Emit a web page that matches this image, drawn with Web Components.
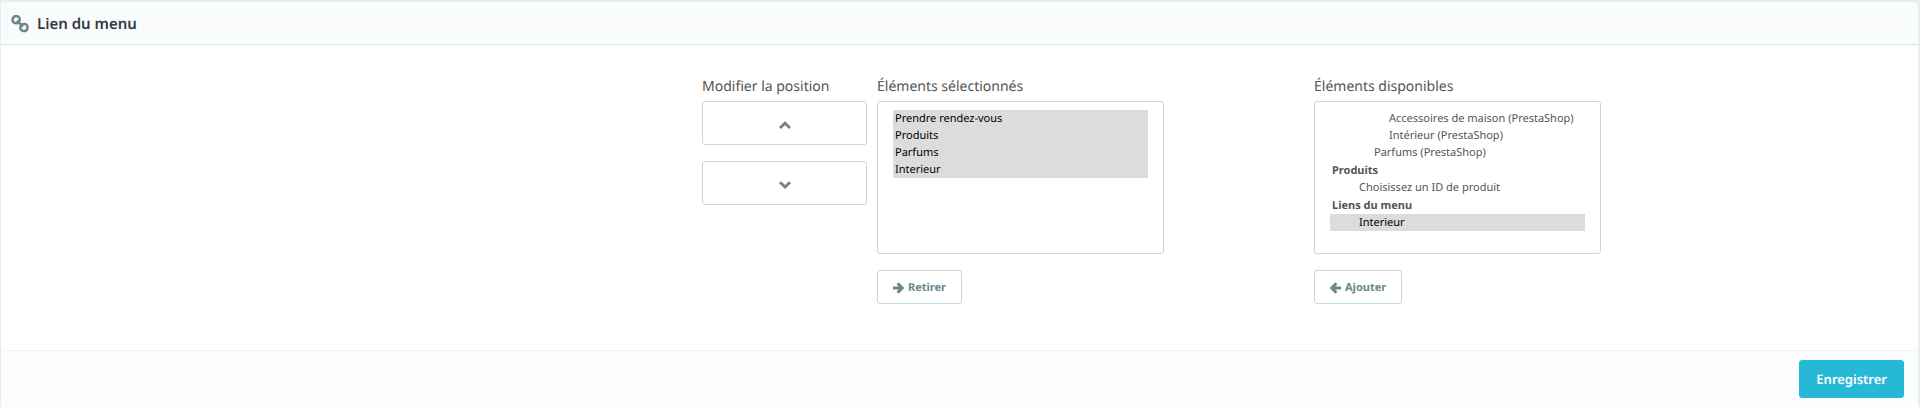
<!DOCTYPE html>
<html lang="fr">
<head>
<meta charset="utf-8">
<title>Lien du menu</title>
<style>
body { margin: 0; background: #e6eeef; font-family: "Noto Sans", "Open Sans", sans-serif; font-size: 14px; color: #555; text-rendering: geometricPrecision; }
</style>
</head>
<body>
<menu-link-form></menu-link-form>
<script>
const ICONS = {
  link: '<svg viewBox="0 0 18 18" width="18" height="18" fill="none" stroke="currentColor" stroke-width="2.5"><rect x="1.6" y="1.2" width="7" height="7" rx="3" transform="rotate(8 5 5)"/><rect x="9.4" y="9" width="7" height="7" rx="3" transform="rotate(8 13 13)"/><path d="M6 5.6L12 11.6" stroke-width="2.2"/></svg>',
  up: '<svg viewBox="0 0 12 8" width="12" height="8" fill="none" stroke="currentColor" stroke-width="2.8"><path d="M1 7L6 2.2L11 7"/></svg>',
  down: '<svg viewBox="0 0 12 8" width="12" height="8" fill="none" stroke="currentColor" stroke-width="2.8"><path d="M1 1.2L6 6L11 1.2"/></svg>',
  right: '<svg viewBox="0 0 11 12" width="11" height="12" fill="none" stroke="currentColor" stroke-width="2.8"><path d="M0 6H9M4.6 1.2L9.2 6L4.6 10.8"/></svg>',
  left: '<svg viewBox="0 0 11 12" width="11" height="12" fill="none" stroke="currentColor" stroke-width="2.8"><path d="M11 6H2M6.4 1.2L1.8 6L6.4 10.8"/></svg>'
};

class UiIcon extends HTMLElement {
  connectedCallback() {
    this.attachShadow({ mode: 'open' }).innerHTML =
      `<style>:host{display:inline-flex;flex:none}svg{display:block}</style>${ICONS[this.getAttribute('name')]}`;
  }
}
customElements.define('ui-icon', UiIcon);

class UiButton extends HTMLElement {
  connectedCallback() {
    const label = this.getAttribute('label');
    this.attachShadow({ mode: 'open' }).innerHTML = `
      <style>
        :host { display: block; }
        button { box-sizing: border-box; display: flex; align-items: center; justify-content: center; gap: 4px;
          margin: 0; padding: 1px 15px 0; height: 34px; border: 1px solid #c7d6db; border-radius: 3px; background: #fff;
          font-family: inherit; font-weight: 700; font-size: 11px; line-height: 16px; color: #6c868e; text-rendering: inherit; }
        :host([kind=block]) button { width: 100%; height: 44px; padding: 4px 16px 0; }
        :host([kind=primary]) button { height: 38px; padding: 0 16px; border-color: #25b9d7; background: #25b9d7;
          color: #fff; font-weight: 600; font-size: 13px; line-height: 20px; }
      </style>
      <button type="button"${label ? ` aria-label="${label}"` : ''}><slot></slot></button>`;
  }
}
customElements.define('ui-button', UiButton);

class UiPanel extends HTMLElement {
  connectedCallback() {
    this.attachShadow({ mode: 'open' }).innerHTML = `
      <style>
        :host { display: flex; flex-direction: column; box-sizing: border-box; min-height: 100vh; padding: 2px 2px 0 1px; }
        section { flex: 1; display: flex; flex-direction: column; background: #fff; border-radius: 4px 4px 0 0; overflow: hidden; }
        header { box-sizing: border-box; display: flex; align-items: center; gap: 8px; height: 43px; padding: 1px 10px 0;
          background: #fafbfd; border-bottom: 1px solid #d3e8eb; color: #6c868e; }
        h2 { margin: 0; font-size: 15px; line-height: 20px; font-weight: 600; color: #363a41; }
        .body { flex: 1; padding: 29px 0 44px; }
        footer { display: flex; justify-content: flex-end; padding: 9px 14px; background: #fcfdfe; border-top: 1px solid #f1f4f5; }
      </style>
      <section>
        <header><slot name="icon"></slot><h2><slot name="title"></slot></h2></header>
        <div class="body"><slot></slot></div>
        <footer><slot name="footer"></slot></footer>
      </section>`;
  }
}
customElements.define('ui-panel', UiPanel);

class LinkList extends HTMLElement {
  connectedCallback() {
    const options = this.querySelector('template').innerHTML;
    this.attachShadow({ mode: 'open' }).innerHTML = `
      <style>
        :host { display: block; }
        label { display: block; margin-bottom: 1px; line-height: 26px; }
        select { box-sizing: border-box; display: block; width: 100%; height: 153px; margin-bottom: 16px; padding: 8px 15px;
          border: 1px solid #c7d6db; border-radius: 3px; background: #fff; color: #555; outline: 0;
          font-family: inherit; font-size: 11px; text-rendering: inherit; overflow: hidden; scrollbar-width: none; }
        option { padding: 1px 2px; min-height: 15px; }
        option:checked { background: linear-gradient(#dcdcdc, #dcdcdc); color: #000; }
        optgroup { padding-top: 2px; }
        optgroup option { padding-left: 29px; }
        .level-2 { padding-left: 44px; }
        .level-3 { padding-left: 59px; }
        .actions { display: flex; }
      </style>
      <label for="list">${this.getAttribute('label')}</label>
      <select id="list" multiple>${options}</select>
      <div class="actions"><slot></slot></div>`;
  }
}
customElements.define('link-list', LinkList);

class MenuLinkForm extends HTMLElement {
  connectedCallback() {
    this.attachShadow({ mode: 'open' }).innerHTML = `
      <style>
        :host { display: block; }
        .row { display: grid; grid-template-columns: 701fr 165fr 10fr 287fr 150fr 287fr 317fr; align-items: start; }
        .position { grid-column: 2; display: flex; flex-direction: column; }
        .position span { line-height: 26px; margin-bottom: 1px; white-space: nowrap; }
        .position ui-button + ui-button { margin-top: 16px; }
        .selected { grid-column: 4; }
        .available { grid-column: 6; }
      </style>
      <ui-panel>
        <ui-icon slot="icon" name="link"></ui-icon>
        <span slot="title">Lien du menu</span>
        <div class="row">
          <div class="position" role="group" aria-labelledby="pos">
            <span id="pos">Modifier la position</span>
            <ui-button kind="block" label="Monter"><ui-icon name="up"></ui-icon></ui-button>
            <ui-button kind="block" label="Descendre"><ui-icon name="down"></ui-icon></ui-button>
          </div>
          <link-list class="selected" label="Éléments sélectionnés">
            <template>
              <option selected>Prendre rendez-vous</option>
              <option selected>Produits</option>
              <option selected>Parfums</option>
              <option selected>Interieur</option>
            </template>
            <ui-button><ui-icon name="right"></ui-icon>Retirer</ui-button>
          </link-list>
          <link-list class="available" label="Éléments disponibles">
            <template>
              <option class="level-3">Accessoires de maison (PrestaShop)</option>
              <option class="level-3">Intérieur (PrestaShop)</option>
              <option class="level-2">Parfums (PrestaShop)</option>
              <optgroup label="Produits"><option>Choisissez un ID de produit</option></optgroup>
              <optgroup label="Liens du menu"><option selected>Interieur</option></optgroup>
            </template>
            <ui-button><ui-icon name="left"></ui-icon>Ajouter</ui-button>
          </link-list>
        </div>
        <ui-button slot="footer" kind="primary">Enregistrer</ui-button>
      </ui-panel>`;
  }
}
customElements.define('menu-link-form', MenuLinkForm);
</script>
</body>
</html>
